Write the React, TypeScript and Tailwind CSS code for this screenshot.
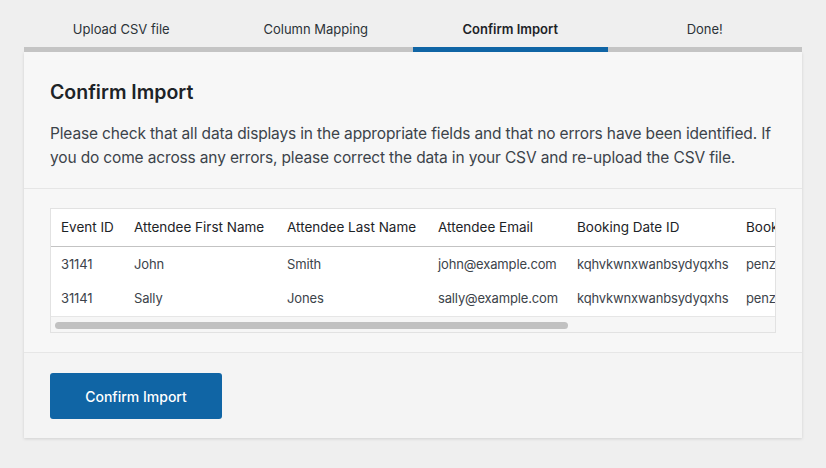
const steps = [
  { label: "Upload CSV file", active: false },
  { label: "Column Mapping", active: false },
  { label: "Confirm Import", active: true },
  { label: "Done!", active: false },
];

const columns = [
  { title: "Event ID", width: "w-[73px]" },
  { title: "Attendee First Name", width: "w-[153px]" },
  { title: "Attendee Last Name", width: "w-[151px]" },
  { title: "Attendee Email", width: "w-[139px]" },
  { title: "Booking Date ID", width: "w-[169px]" },
  { title: "Booking Ticket ID", width: "w-[169px]" },
];

const rows = [
  ["31141", "John", "Smith", "john@example.com", "kqhvkwnxwanbsydyqxhs", "penzsqdlkrmvbtwhaeco"],
  ["31141", "Sally", "Jones", "sally@example.com", "kqhvkwnxwanbsydyqxhs", "penzsqdlkrmvbtwhaeco"],
];

const App = () => {
  return (
    <div className="min-h-[468px] w-full bg-[#efefef] px-6 pt-[13px] font-['Inter',sans-serif]">
      <div className="flex">
        {steps.map((step) => (
          <div key={step.label} className="flex flex-1 flex-col">
            <div
              className={`flex h-[34px] items-center justify-center text-[13px] ${
                step.active ? "font-semibold text-[#1d2327]" : "text-[#2c3338]"
              }`}
            >
              {step.label}
            </div>
            <div className={`h-[5px] ${step.active ? "bg-[#1065a5]" : "bg-[#c4c4c4]"}`} />
          </div>
        ))}
      </div>

      <div className="bg-[#f7f7f7] shadow-[0_1px_3px_rgba(0,0,0,0.13)]">
        <div className="border-b border-[#e6e6e6] px-[26px] pt-[27px] pb-[18px]">
          <h2 className="text-[19.5px] font-semibold leading-[26px] text-[#1d2327]">Confirm Import</h2>
          <p className="mt-[17px] text-[15.5px] leading-[24px] tracking-[-0.15px] text-[#3c434a]">
            Please check that all data displays in the appropriate fields and that no errors have been identified. If
            you do come across any errors, please correct the data in your CSV and re-upload the CSV file.
          </p>
        </div>

        <div className="border-b border-[#e6e6e6] px-[26px] py-[19px]">
          <div className="overflow-hidden border border-[#e2e2e2] bg-white">
            <div className="overflow-hidden">
              <table className="w-[854px] table-fixed border-collapse text-[13.5px] text-[#2c3338]">
                <thead>
                  <tr className="border-b border-[#c3c3c3]">
                    {columns.map((col) => (
                      <th
                        key={col.title}
                        className={`${col.width} h-[37px] whitespace-nowrap px-[10px] text-left font-normal text-[#1d2327]`}
                      >
                        {col.title}
                      </th>
                    ))}
                  </tr>
                </thead>
                <tbody>
                  {rows.map((row, i) => (
                    <tr key={i} className={i === 0 ? "h-[36px]" : "h-[34px]"}>
                      {row.map((cell, j) => (
                        <td
                          key={j}
                          className="whitespace-nowrap px-[10px] text-[13px] tracking-[-0.15px] text-[#3c434a]"
                        >
                          {cell}
                        </td>
                      ))}
                    </tr>
                  ))}
                </tbody>
              </table>
            </div>
            <div className="border-t border-[#e6e6e6] bg-[#f6f6f6] px-[4px] pt-[5px] pb-[3px]">
              <div className="h-[7px] w-[513px] rounded-full bg-[#c1c1c1]" />
            </div>
          </div>
        </div>

        <div className="bg-[#f4f4f4] px-[26px] pt-[20px] pb-[19px]">
          <button className="h-[46px] w-[172px] rounded-[3px] bg-[#1065a5] text-[14px] font-medium text-white">
            Confirm Import
          </button>
        </div>
      </div>
    </div>
  );
};

export default App;
